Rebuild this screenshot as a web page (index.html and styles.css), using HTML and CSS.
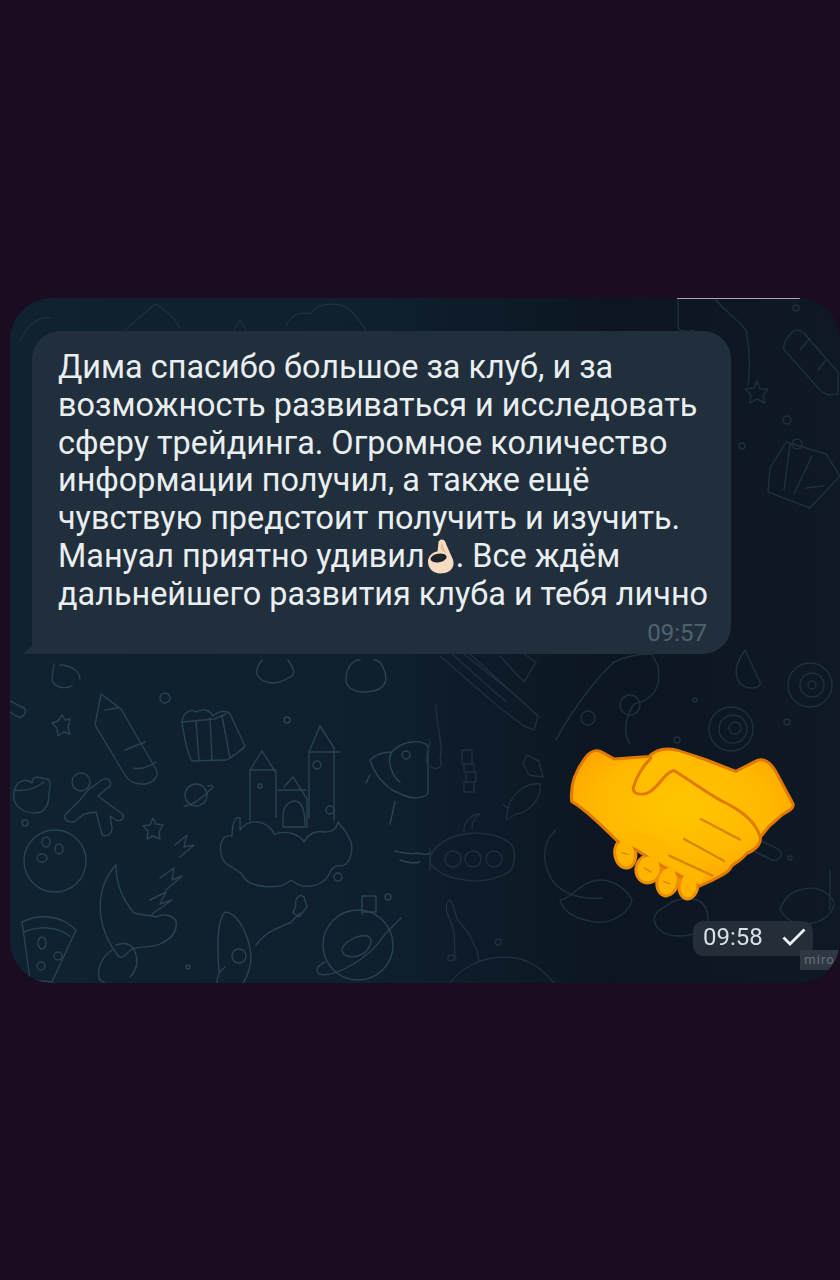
FILE: index.html
```html
<!DOCTYPE html>
<html lang="ru">
<head>
<meta name="viewport" content="width=device-width, initial-scale=1">
<title>Отзыв</title>
<link rel="stylesheet" href="styles.css">
</head>
<body>
  <div class="chat">
    <!-- wallpaper doodles, coordinates are page pixels -->
    <svg class="wallpaper" viewBox="10 298 830 685">
      <g class="doodle">
        <!-- pencil -->
        <path d="M101 694l20 15 36 62c2 8-8 14-16 13-8 0-13-4-16-9l-30-50z"/>
        <path d="M105 710l13-2M125 750l20-8M134 768c8 2 16-2 22-6"/>
        <!-- gift -->
        <path d="M182 722c0-8 8-14 14-10 6-4 14-2 17 4 6-6 16-6 18 0l14 30c-3 4-8 8-19 14l-34 1c-6-10-8-26-10-39z"/>
        <path d="M196 722l3 38M210 718l2 42M222 716l8 42M182 722l32-3 12-5"/>
        <!-- castle on a cloud -->
        <path d="M250 770l12-19 14 22v44M250 770v50M284 787l9-10 14 22v28h-24v-12c0-8 6-14 12-14s10 8 10 24M309 752l11-26 14 22v72M309 752v66"/>
        <path d="M250 770h26M278 790h28M309 752h30"/>
        <circle cx="317" cy="765" r="4"/><circle cx="330" cy="810" r="4"/><circle cx="260" cy="786" r="2"/>
        <path d="M240 818c-8-4-8 18-8 18-14-4-16 24-2 30 6 4 10 6 12 8 4 12 22 14 38 12 8-2 10-8 14-4 10 8 28 4 34-6 4-8 6-10 10-10 12 2 18-18 10-30-2-6-8-10-10-14-2 8-6 10-14 10-8-2-16 2-20 10-4-8-18-12-30-8-4-12-24-18-34-4z"/>
        <!-- planet, stars, dots -->
        <circle cx="196" cy="795" r="11"/><path d="M184 806c8 0 18-8 26-16 4-2 4-6-2-4"/>
        <path d="M62 715l3 5 5-1-2 8 2 7-6-2-6 4-1-8-5-5 6-2z"/>
        <path d="M153 818l3 6 7 1-4 7 1 7-7-3-6 3 1-8-5-5 7-1z"/>
        <circle cx="165" cy="698" r="5"/><circle cx="287" cy="720" r="3"/><circle cx="25" cy="823" r="3"/><circle cx="338" cy="877" r="4"/><circle cx="388" cy="897" r="3"/><circle cx="188" cy="967" r="2"/>
        <!-- monkey head, gingerbread -->
        <path d="M18 783c6-4 10-4 14 0 0-8 8-6 14-4 6 0 4 8 3 14 0 10-2 20-14 20-10 0-20-6-21-14-1-6 1-12 4-16zM14 790c12 2 22-2 30-8"/>
        <circle cx="81" cy="782" r="9"/><path d="M88 790l14-10c6-4 10 2 8 6l-12 10 24 18c4 4-2 8-6 6l-6-4 2 12c0 6-6 10-10 6l-6-22-12 2-10 8c-8 0-12-4-8-8l14-14z"/>
        <!-- ball -->
        <circle cx="55" cy="861" r="31"/><ellipse cx="46" cy="842" rx="4" ry="5"/><ellipse cx="59" cy="849" rx="4" ry="5"/><ellipse cx="42" cy="858" rx="5" ry="4"/>
        <!-- moon and z's -->
        <path d="M116 865c-22 24-20 60 0 88 6 8 6 4 16-4 12-4 20 0 30-6 8-4 16-10 14-22-4-6-12-8-20-4-4-2-16-2-22-4-12-14-18-30-18-48z"/>
        <path d="M175 845l12-10-3 12 10-2-14 12M160 878l14-10-2 12 10-4-16 14M150 900l16-8-6 12 12-4-20 14"/>
        <path d="M112 950c-12 8-16 22-12 30l18 12M116 945c10-4 18 0 20 10 2 8 0 16-6 22"/>
        <!-- rocket, astronaut -->
        <path d="M225 912c12 0 24 22 26 44 0 8-2 18-8 27M225 912c-8 8-8 32-6 60M217 983c0-6 2-12 8-16"/>
        <circle cx="239" cy="956" r="7"/><path d="M256 945c10-14 24-18 34-22l10-10M296 905c-2-6 4-12 8-8l3 10-8 10-6-4z"/>
        <!-- planet with flag -->
        <circle cx="358" cy="945" r="35"/><path d="M362 914v-18h14v16h-14M342 950c0-6 14-16 26-14 6 4 2 16-10 20-8 2-16 0-16-6zM325 962c-8 4-10 8-6 12 14 4 50-14 66-40l16-16"/>
        <!-- pizza -->
        <path d="M22 922c16-8 38-8 54 8l-24 52-22-2zM24 932c14-6 32-6 46 4"/><ellipse cx="42" cy="943" rx="4" ry="6"/><circle cx="58" cy="956" r="4"/><circle cx="41" cy="966" r="4"/>
        <!-- ufo -->
        <path d="M392 752c8-10 28-14 36-6v48c-12 8-24 2-36-4-8-6-18-16-22-30 6-6 14-8 22-8zM392 752c-6 8 0 24 8 30"/><circle cx="406" cy="755" r="4"/>
        <path d="M395 802l-5 22M370 775l-4 8"/>
        <!-- waves, bits under the bubble -->
        <path d="M395 851c8 2 14 4 22 2 6 2 10 2 14 0M400 860c6 2 12 4 20 2"/>
        <path d="M54 664l-2 14c0 8 10 12 20 8M60 665c10 0 20 6 20 14"/>
        <path d="M8 700l16 8c4 4-2 12-8 8l-12-8"/>
        <path d="M360 660c-8 0-14 8-14 20 0 6 6 12 18 12 12 0 20-4 22-12 0-8-4-20-12-20"/>
        <path d="M262 660c-6 8-8 14 0 20 10 6 20 2 30-4 4-4 0-10-4-16"/>
      </g>
      <g class="doodle doodle-dim">
        <!-- ship, rod, spirals -->
        <path d="M440 656l60 52 24 18 10 4 4-14-24-22-50-40M452 654l54 48M470 654l46 42M500 656l24 26 12-20-12-8"/>
        <path d="M556 740c6-12 30-52 58-78 12-6 24-8 38-8l6 12c4 22-6 34-24 38-8 12-12 28-4 40"/>
        <circle cx="630" cy="705" r="10"/><circle cx="588" cy="718" r="7"/>
        <path d="M745 650l14 30c6 8-12 12-20 2-6-10-2-20 6-32z"/>
        <circle cx="810" cy="685" r="22"/><circle cx="812" cy="685" r="12"/><circle cx="812" cy="685" r="4"/>
        <circle cx="731" cy="729" r="22"/><circle cx="733" cy="729" r="14"/><circle cx="735" cy="728" r="6"/>
        <circle cx="787" cy="722" r="3"/><circle cx="677" cy="740" r="3"/><circle cx="695" cy="700" r="2"/>
        <!-- submarine, fish, candy -->
        <path d="M430 860c0-12 16-22 30-25 16-4 36-2 50 8 6 6 6 20 0 28-14 10-36 12-50 8-14-2-30-10-30-19z"/>
        <circle cx="453" cy="859" r="8"/><circle cx="473" cy="859" r="8"/><circle cx="494" cy="859" r="8"/>
        <path d="M464 832c-1-10 8-18 16-18-6 4-8 8-8 14M430 848v22"/>
        <path d="M508 808c4-14 18-26 32-24 2 14-10 28-24 30l-10 6 2-12-6-4z"/>
        <path d="M462 750h10v14h-10zM466 772h10v10h-10zM464 764h10v8h-10zM464 782h10v10h-10z"/>
        <path d="M527 755l12 6 4 16-14-2-6-12z"/>
        <path d="M436 705c0 20 8 40 4 54 6 10-10 14-14 2 0-8 4-14 4-20"/>
        <!-- squiggles near the bottom -->
        <path d="M450 900c6 8 4 14 8 20s10 10 14 20c4 8 8 16 6 22M450 900c-6 4-4 12 0 20 8 16 2 24 6 40"/>
        <circle cx="498" cy="942" r="3"/><circle cx="451" cy="958" r="3"/>
        <path d="M450 983c10-14 30-26 54-26 26 0 40 14 50 26"/>
        <path d="M560 900c10 0 22-20 40-20 20 0 30 16 32 20-2 12-20 24-36 22-16-2-32-8-36-22zM654 918c4-10 8-8 18-16 14-6 34-6 36 14 2 16-16 20-30 20-14 0-24-8-24-18z"/>
        <path d="M620 860c20-10 30-18 40-18M800 890c12-4 26-2 34 12 0 10-8 20-28 22-12 0-20-4-26-14 4-12 10-18 20-20zM830 870v40"/>
        <path d="M556 830c-12 10-16 30-4 50 10 14 30 20 50 18"/>
        <path d="M716 820l60 28c10 4 4 14-4 12l-60-30"/>
        <circle cx="617" cy="796" r="2"/><circle cx="790" cy="858" r="2"/>
        <!-- upper right corner -->
        <path d="M786 340l6-8c6-4 12 0 16 6l30 34v22c-10 2-14 0-18-4l-34-38c-4-4-2-8 0-12zM800 350l10-12M818 370l8-10"/>
        <path d="M757 381l3 8 8 0-5 6 2 8-8-4-7 4 1-8-6-6 9-1z"/>
        <path d="M770 468l16-26 40 12 14 22-30 32-42-16zM790 444l-6 46M812 456l-18 38M824 486l-18 2"/>
        <circle cx="742" cy="446" r="3"/><circle cx="787" cy="420" r="4"/><circle cx="797" cy="444" r="5"/><circle cx="796" cy="308" r="3"/>
        <!-- top edge -->
        <path d="M678 300v26c0 6 10 6 16 4M716 300c8 10 20 18 30 30 4 20 4 40 2 56"/>
        <path d="M125 330l30-26c10 6 22 14 24 24M286 326c4-8 12-16 24-12 8-12 30-14 42-2 6 6 10 12 14 18M20 340c8-16 20-24 30-22M234 330l6-10 6 10"/>
      </g>
    </svg>

    <div class="bubble">
      <p class="message">Дима спасибо большое за клуб, и за<br>
      возможность развиваться и исследовать<br>
      сферу трейдинга. Огромное количество<br>
      информации получил, а также ещё<br>
      чувствую предстоит получить и изучить.<br>
      Мануал приятно удивил<svg class="ok-hand" viewBox="0 0 28 36"><path fill="#f7dcc2" d="M12 3c3-4 7-2 8 3l7 16c2 7-2 13-11 14C7 37 1 31 1 24c0-6 5-10 10-11z"/><path fill="#e6bd9a" d="M15 4c2 3 3 8 5 11l-4-2c-2-2-2-6-1-9z"/><ellipse fill="#1d232a" cx="12" cy="20" rx="8.500" ry="4.500" transform="rotate(-10 12 20)"/></svg>. Все ждём<br>
      дальнейшего развития клуба и тебя лично</p>
      <div class="time">09:57</div>
    </div>

    <div class="sticker-row">
      <svg class="handshake" viewBox="50 40 700 480">
        <defs>
          <radialGradient id="skin" cx="50%" cy="42%" r="58%">
            <stop offset="0" stop-color="#ffc600"/>
            <stop offset="0.65" stop-color="#ffb900"/>
            <stop offset="1" stop-color="#ffa400"/>
          </radialGradient>
        </defs>
        <g fill="#ffb000" stroke="#f08c00" stroke-width="10">
          <ellipse cx="228" cy="372" rx="31" ry="43" transform="rotate(-8 228 372)"/>
          <ellipse cx="298" cy="418" rx="37" ry="42" transform="rotate(20 298 418)"/>
          <ellipse cx="355" cy="455" rx="31" ry="44" transform="rotate(12 355 455)"/>
          <ellipse cx="418" cy="467" rx="28" ry="41" transform="rotate(8 418 467)"/>
        </g>
        <path fill="url(#skin)" stroke="#e07a00" stroke-width="9" stroke-linejoin="round" d="M67 215C62 170 78 125 105 88 120 66 140 56 160 68L195 88 300 80C320 60 345 52 385 62L470 90 560 125 625 92C645 85 665 100 680 125L732 222C735 235 725 240 700 255L660 290 634 322C636 345 620 360 592 372 575 395 552 402 546 412 540 430 510 440 490 452L450 470 340 410 260 360 205 335C160 290 110 240 67 215Z"/>
        <!-- covers the outline where the fingers join the palm -->
        <path fill="#ffb800" d="M212 336L268 352 345 400 455 462 475 420 340 330 250 300Z"/>
        <g fill="#ffb400">
          <ellipse cx="228" cy="372" rx="27" ry="39" transform="rotate(-8 228 372)"/>
          <ellipse cx="298" cy="418" rx="33" ry="38" transform="rotate(20 298 418)"/>
          <ellipse cx="355" cy="455" rx="27" ry="40" transform="rotate(12 355 455)"/>
          <ellipse cx="418" cy="467" rx="24" ry="37" transform="rotate(8 418 467)"/>
        </g>
        <g fill="none" stroke-linecap="round">
          <path stroke="#d98400" stroke-width="4" d="M218 370l20 4M285 415l20 12M342 455l20 8"/>
          <path stroke="#dc8500" stroke-width="7" d="M455 268l118 62M405 328l120 66M360 378l130 60"/>
        </g>
        <path fill="#ffbe00" d="M252 178C262 145 280 110 305 88 335 70 370 65 385 66L440 84 375 122C340 130 330 178 290 192 265 196 250 192 252 178Z"/>
        <path fill="none" stroke="#e07a00" stroke-width="9" stroke-linecap="round" stroke-linejoin="round" d="M305 85C280 110 260 145 252 175 250 190 265 196 290 192 330 178 340 130 375 122 420 150 480 195 530 220 580 245 620 280 632 318"/>
      </svg>
    </div>

    <div class="time-row">
      <div class="time-pill">
        <span>09:58</span>
        <svg class="check" viewBox="0 0 24 18"><path d="M1.500 9.500l6.500 6.500 14.500-14.500"/></svg>
      </div>
    </div>

    <div class="miro">miro</div>
    <div class="top-line"></div>
  </div>
</body>
</html>
```

FILE: styles.css
```css
body {
  margin: 0;
  height: 1280px;
  padding-top: 298px;
  box-sizing: border-box;
  overflow: hidden;
  background-color: #1a0d21;
  font-family: Roboto, "Liberation Sans", sans-serif;
}

.chat {
  position: relative;
  box-sizing: border-box;
  width: 830px;
  height: 685px;
  margin-left: 10px;
  padding: 33px 0 0 22px;
  overflow: hidden;
  border-radius: 42px;
  background: linear-gradient(90deg, #10212f 0%, #0f1f2d 45%, #0c1622 72%, #0e1925 100%);
  filter: blur(0.5px);
}

.wallpaper {
  position: absolute;
  top: 0;
  left: 0;
  width: 830px;
  height: 685px;
}

.doodle {
  fill: none;
  stroke: #2a4352;
  stroke-width: 1.4;
  stroke-linecap: round;
  stroke-linejoin: round;
}

.doodle-dim {
  stroke: #1f2f3c;
}

.bubble {
  position: relative;
  box-sizing: border-box;
  width: 699px;
  height: 323px;
  padding: 18px 24px 0 26px;
  border-radius: 28px 28px 28px 0;
  background-color: #212f3c;
}

/* little tail at the bottom left */
.bubble::before {
  content: "";
  position: absolute;
  left: -10px;
  bottom: 0;
  width: 10px;
  height: 8px;
  background-color: #212f3c;
  clip-path: polygon(100% 0, 100% 100%, 0 100%);
}

.message {
  margin: 0;
  color: #e9eef1;
  font-size: 32.4px;
  line-height: 37.8px;
  white-space: nowrap;
}

.ok-hand {
  width: 27px;
  height: 36px;
  margin: 0 2px;
  vertical-align: -7px;
}

.time {
  margin-top: 5px;
  text-align: right;
  color: #506270;
  font-size: 24px;
  line-height: 28px;
}

.sticker-row {
  position: relative;
  display: flex;
  justify-content: flex-end;
  height: 160px;
  margin-top: 89px;
  padding-right: 41px;
}

.handshake {
  width: 233px;
  height: 160px;
}

.time-row {
  position: relative;
  display: flex;
  justify-content: flex-end;
  margin-top: 18px;
  padding-right: 27px;
}

.time-pill {
  display: flex;
  align-items: center;
  justify-content: space-between;
  box-sizing: border-box;
  width: 120px;
  height: 35px;
  padding: 0 7px 3px 10px;
  border-radius: 10px;
  background-color: #232e39;
  color: #d9dfe3;
  font-size: 24px;
}

.check {
  width: 24px;
  height: 18px;
  fill: none;
  stroke: #eef1f3;
  stroke-width: 2.8;
}

.miro {
  position: absolute;
  right: 1px;
  bottom: 13px;
  width: 39px;
  height: 20px;
  background-color: #2e3843;
  color: #667079;
  font-size: 13px;
  line-height: 20px;
  text-align: center;
  letter-spacing: 1px;
}

.top-line {
  position: absolute;
  top: 0;
  left: 667px;
  width: 123px;
  height: 1px;
  background-color: #a9a9ad;
}
```
